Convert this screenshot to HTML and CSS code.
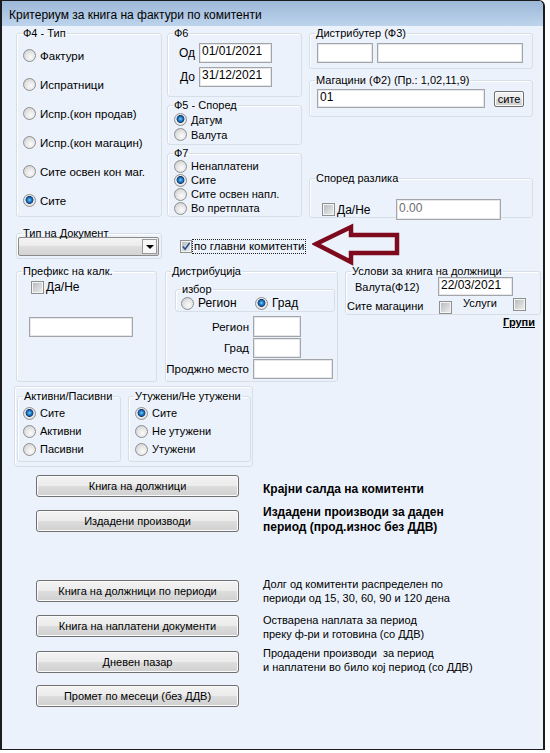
FILE: index.html
```html
<!DOCTYPE html>
<html lang="mk">
<head>
    <meta charset="UTF-8">
    <meta name="viewport" content="width=device-width, initial-scale=1.0">
    <title>Критериум за книга на фактури по комитенти</title>
    <link rel="stylesheet" href="styles.css">
</head>
<body>
<div class="window">
    <div class="titlebar">Критериум за книга на фактури по комитенти</div>
    <div class="client">

        <!-- Горен дел: тип, период, дистрибутер -->
        <div class="row-top">
            <fieldset class="grp g-f4">
                <legend>Ф4 - Тип</legend>
                <div class="f4-list">
                    <label class="opt"><span class="dot"></span>Фактури</label>
                    <label class="opt"><span class="dot"></span>Испратници</label>
                    <label class="opt"><span class="dot"></span>Испр.(кон продав)</label>
                    <label class="opt"><span class="dot"></span>Испр.(кон магацин)</label>
                    <label class="opt"><span class="dot"></span>Сите освен кон маг.</label>
                    <label class="opt"><span class="dot on"></span>Сите</label>
                </div>
            </fieldset>

            <div class="col-mid">
                <fieldset class="grp g-f6">
                    <legend>Ф6</legend>
                    <div class="dates">
                        <span>Од</span><input type="text" class="tb tb-date" value="01/01/2021">
                        <span>До</span><input type="text" class="tb tb-date" value="31/12/2021">
                    </div>
                </fieldset>
                <fieldset class="grp g-f5">
                    <legend>Ф5 - Според</legend>
                    <div class="f5-list">
                        <label class="opt"><span class="dot on"></span>Датум</label>
                        <label class="opt"><span class="dot"></span>Валута</label>
                    </div>
                </fieldset>
                <fieldset class="grp g-f7">
                    <legend>Ф7</legend>
                    <div class="f7-list">
                        <label class="opt"><span class="dot"></span>Ненаплатени</label>
                        <label class="opt"><span class="dot on"></span>Сите</label>
                        <label class="opt"><span class="dot"></span>Сите освен напл.</label>
                        <label class="opt"><span class="dot"></span>Во претплата</label>
                    </div>
                </fieldset>
            </div>

            <div class="col-right">
                <fieldset class="grp g-dist">
                    <legend>Дистрибутер (Ф3)</legend>
                    <div class="dist-row">
                        <input type="text" class="tb tb-dist-code">
                        <input type="text" class="tb tb-dist-name">
                    </div>
                </fieldset>
                <fieldset class="grp g-mag">
                    <legend>Магацини (Ф2) (Пр.: 1,02,11,9)</legend>
                    <div class="mag-row">
                        <input type="text" class="tb tb-mag" value="01">
                        <button class="btn btn-small">сите</button>
                    </div>
                </fieldset>
                <fieldset class="grp g-razl">
                    <legend>Според разлика</legend>
                    <div class="razl-row">
                        <label class="chk chk-razl"><span class="box"></span>Да/Не</label>
                        <input type="text" class="tb tb-razl" value="0.00" disabled>
                    </div>
                </fieldset>
            </div>
        </div>

        <!-- Тип на документ -->
        <div class="row-doc">
            <fieldset class="grp g-doc">
                <legend>Тип на Документ</legend>
                <div class="combo"><span class="combo-btn"></span></div>
            </fieldset>
            <label class="chk chk-glavni">
                <span class="box">
                    <svg width="11" height="11" viewBox="0 0 11 11"><path d="M2 5.5 L4.5 8.5 L9.5 1.5" fill="none" stroke="#27508f" stroke-width="1.8"/></svg>
                </span>
                <span class="focus">по главни комитенти</span>
            </label>
            <svg class="arrow" width="90" height="44" viewBox="0 0 90 44">
                <polygon points="4,21 39,4 39,12 85,12 85,30 39,30 39,39" fill="none" stroke="#7e0a1e" stroke-width="4.5" stroke-linejoin="miter"/>
            </svg>
        </div>

        <!-- Префикс, дистрибуција, услови -->
        <div class="row-mid">
            <fieldset class="grp g-pref">
                <legend>Префикс на калк.</legend>
                <label class="chk chk-pref"><span class="box"></span>Да/Не</label>
                <input type="text" class="tb tb-pref">
            </fieldset>

            <fieldset class="grp g-distr">
                <legend>Дистрибуција</legend>
                <fieldset class="grp g-izbor">
                    <legend>избор</legend>
                    <div class="izbor-row">
                        <label class="opt opt-region"><span class="dot"></span>Регион</label>
                        <label class="opt"><span class="dot on"></span>Град</label>
                    </div>
                </fieldset>
                <div class="loc">
                    <span>Регион</span><input type="text" class="tb tb-loc1">
                    <span>Град</span><input type="text" class="tb tb-loc2">
                    <span>Проджно место</span><input type="text" class="tb tb-loc3">
                </div>
            </fieldset>

            <div class="col-usl">
                <fieldset class="grp g-usl">
                    <legend>Услови за книга на должници</legend>
                    <div class="usl-row1">
                        <span class="usl-lbl">Валута(Ф12)</span>
                        <input type="text" class="tb tb-valuta" value="22/03/2021">
                    </div>
                    <div class="usl-row2">
                        <span class="usl-mag">Сите магацини</span>
                        <span class="box box-mag"></span>
                        <span class="usl-usl">Услуги</span>
                        <span class="box box-usl"></span>
                    </div>
                </fieldset>
                <div class="grupi">Групи</div>
            </div>
        </div>

        <!-- Активни / утужени -->
        <div class="panel">
            <fieldset class="grp g-akt">
                <legend>Активни/Пасивни</legend>
                <div class="akt-list">
                    <label class="opt"><span class="dot on"></span>Сите</label>
                    <label class="opt"><span class="dot"></span>Активни</label>
                    <label class="opt"><span class="dot"></span>Пасивни</label>
                </div>
            </fieldset>
            <fieldset class="grp g-utu">
                <legend>Утужени/Не утужени</legend>
                <div class="utu-list">
                    <label class="opt"><span class="dot on"></span>Сите</label>
                    <label class="opt"><span class="dot"></span>Не утужени</label>
                    <label class="opt"><span class="dot"></span>Утужени</label>
                </div>
            </fieldset>
        </div>

        <!-- Извештаи -->
        <div class="actions">
            <div class="act act-1">
                <button class="btn">Книга на должници</button>
                <div class="desc bold">Крајни салда на комитенти</div>
            </div>
            <div class="act act-2">
                <button class="btn">Издадени производи</button>
                <div class="desc bold">Издадени производи за даден<br>период (прод.износ без ДДВ)</div>
            </div>
            <div class="act act-3">
                <button class="btn">Книга на должници по периоди</button>
                <div class="desc">Долг од комитенти распределен по<br>периоди од 15, 30, 60, 90 и 120 дена</div>
            </div>
            <div class="act act-4">
                <button class="btn">Книга на наплатени документи</button>
                <div class="desc">Остварена наплата за период<br>преку ф-ри и готовина (со ДДВ)</div>
            </div>
            <div class="act act-5">
                <button class="btn">Дневен пазар</button>
                <div class="desc">Продадени производи&nbsp; за период<br>и наплатени во било кој период (со ДДВ)</div>
            </div>
            <div class="act act-6">
                <button class="btn">Промет по месеци (без ДДВ)</button>
            </div>
        </div>

    </div>
</div>
</body>
</html>
```

FILE: styles.css
```css
body {
    margin: 0;
    background: #fff;
    font-family: "Liberation Sans", Arial, sans-serif;
    font-size: 11px;
    color: #000;
}
.window {
    width: 545px;
    height: 750px;
    box-sizing: border-box;
    border: 1px solid #1c1c1c;
    border-left-width: 2px;
    border-right-width: 2px;
    border-radius: 0 6px 0 0;
    background: #ecf2fb;
    overflow: hidden;
}
.titlebar {
    height: 21px;
    padding: 4px 0 0 7px;
    line-height: 21px;
    font-size: 12px;
    background: linear-gradient(#9db7d8, #bdd4ec);
    white-space: nowrap;
}
.client {
    padding: 1px 0 0 14px;
}

/* group box */
.grp {
    margin: 0;
    padding: 0;
    min-width: 0;
    box-sizing: border-box;
    border: 1px solid #d5dfe5;
    border-radius: 3px;
    box-shadow: inset 1px 1px 0 #fff;
}
.grp legend {
    margin-left: 5px;
    padding: 0 1px;
    line-height: 12px;
    font-size: 11px;
}

/* radio / checkbox */
.opt {
    display: flex;
    align-items: center;
    gap: 4px;
    white-space: nowrap;
}
.dot {
    width: 13px;
    height: 13px;
    box-sizing: border-box;
    border-radius: 50%;
    border: 1px solid #8e8f8f;
    background: radial-gradient(circle at 60% 65%, #fbfbfb 0, #e2e2e2 55%, #c3c3c3 100%);
    flex: none;
}
.dot.on {
    background: radial-gradient(circle at 50% 45%, #8fd0f7 0, #2b8ad3 1.6px, #0c5aa5 3px, #1b3b66 3.6px, #ececec 4.3px, #d3d3d3 100%);
}
.chk {
    display: flex;
    align-items: center;
    white-space: nowrap;
}
.box {
    width: 13px;
    height: 13px;
    box-sizing: border-box;
    border: 1px solid #8e8f8f;
    background: linear-gradient(135deg, #b3b7bc, #f0f0f0);
    box-shadow: inset 0 0 0 1px #f4f4f4;
    display: inline-flex;
    align-items: center;
    justify-content: center;
    flex: none;
}

/* text boxes and buttons */
.tb {
    box-sizing: border-box;
    height: 20px;
    margin: 0;
    padding: 0 2px 4px;
    border: 1px solid #a3a5a9;
    box-shadow: inset 0 0 0 1px #e6e7ea;
    background: #fff;
    font-family: "Liberation Sans", Arial, sans-serif;
    font-size: 12px;
    color: #000;
    outline: none;
}
.btn {
    box-sizing: border-box;
    height: 22px;
    margin: 0;
    padding: 0;
    border: 1px solid #707070;
    border-radius: 3px;
    background: linear-gradient(#f3f3f3 0%, #ebebeb 50%, #dddddd 50%, #d0d0d0 100%);
    box-shadow: inset 0 0 0 1px #fbfbfb;
    font-family: "Liberation Sans", Arial, sans-serif;
    font-size: 11px;
    font-weight: 400;
    color: #000;
}

/* row top */
.row-top {
    display: flex;
    align-items: flex-start;
}
.g-f4 {
    width: 146px;
    height: 190px;
}
.f4-list {
    padding: 2px 0 0 6px;
    font-size: 11.5px;
}
.f4-list .opt {
    height: 29px;
}
.col-mid {
    margin-left: 5px;
    width: 135px;
    display: flex;
    flex-direction: column;
    gap: 2px;
}
.g-f6 {
    height: 70px;
}
.dates {
    display: grid;
    grid-template-columns: 17px 73px;
    column-gap: 4px;
    row-gap: 4px;
    align-items: center;
    padding: 4px 0 0 10px;
}
.dates span {
    text-align: right;
    font-size: 12px;
}
.tb-date {
    width: 73px;
}
.g-f5 {
    height: 46px;
}
.f5-list {
    padding: 1px 0 0 6px;
}
.f5-list .opt {
    height: 15px;
}
.g-f7 {
    height: 70px;
}
.f7-list {
    padding: 0 0 0 6px;
}
.f7-list .opt {
    height: 14px;
}
.col-right {
    margin-left: 7px;
    width: 224px;
}
.g-dist {
    height: 42px;
}
.dist-row {
    display: flex;
    gap: 4px;
    padding: 4px 0 0 7px;
}
.tb-dist-code {
    width: 56px;
}
.tb-dist-name {
    width: 146px;
}
.g-mag {
    margin-top: 5px;
    height: 43px;
}
.mag-row {
    display: flex;
    align-items: flex-start;
    padding: 3px 0 0 7px;
}
.tb-mag {
    width: 168px;
    height: 19px;
}
.btn-small {
    width: 30px;
    height: 16px;
    margin: 2px 0 0 9px;
    border-radius: 2px;
    line-height: 12px;
}
.g-razl {
    margin-top: 55px;
    height: 46px;
}
.razl-row {
    display: flex;
    align-items: center;
    padding: 15px 0 0 12px;
}
.chk-razl {
    width: 74px;
    gap: 2px;
    font-size: 12px;
}
.tb-razl {
    width: 105px;
    height: 21px;
    color: #6d6d6d;
}

/* row doc */
.row-doc {
    position: relative;
    display: flex;
    align-items: flex-start;
    margin-top: 9px;
}
.g-doc {
    width: 146px;
    height: 32px;
}
.combo {
    box-sizing: border-box;
    width: 141px;
    height: 19px;
    margin: -2px 0 0 1px;
    border: 1px solid #8a8a8a;
    border-radius: 2px;
    background: linear-gradient(#f4f4f4 0%, #ebebeb 50%, #dedede 50%, #d3d3d3 100%);
    display: flex;
    justify-content: flex-end;
    align-items: center;
    padding-right: 1px;
}
.combo-btn {
    box-sizing: border-box;
    width: 15px;
    height: 15px;
    border: 1px solid #9a9a9a;
    background: #f7f7f7;
    display: flex;
    align-items: center;
    justify-content: center;
}
.combo-btn::after {
    content: "";
    border-left: 4px solid transparent;
    border-right: 4px solid transparent;
    border-top: 4px solid #000;
}
.chk-glavni {
    margin: 12px 0 0 18px;
    font-size: 11.5px;
}
.chk-glavni .box {
    width: 12px;
}
.focus {
    border: 1px dotted #222;
    padding: 0 1px;
    line-height: 13px;
}
.arrow {
    position: absolute;
    left: 296px;
    top: -4px;
}

/* row mid */
.row-mid {
    display: flex;
    align-items: flex-start;
    margin-top: 6px;
}
.g-pref {
    width: 141px;
    height: 117px;
}
.chk-pref {
    margin: 3px 0 0 14px;
    gap: 2px;
    font-size: 12px;
}
.tb-pref {
    display: block;
    width: 104px;
    margin: 23px 0 0 12px;
}
.g-distr {
    margin-left: 8px;
    width: 173px;
    height: 117px;
}
.g-izbor {
    margin: 6px 0 0 9px;
    width: 160px;
    height: 29px;
}
.izbor-row {
    display: flex;
    padding: 1px 0 0 5px;
    font-size: 12px;
}
.opt-region {
    width: 74px;
}
.loc {
    display: grid;
    grid-template-columns: 83px auto;
    column-gap: 4px;
    row-gap: 1px;
    margin-top: 4px;
    font-size: 11.5px;
}
.loc span {
    text-align: right;
    align-self: center;
    white-space: nowrap;
}
.tb-loc1 {
    width: 48px;
    height: 21px;
}
.tb-loc2 {
    width: 48px;
}
.tb-loc3 {
    width: 80px;
}
.col-usl {
    margin-left: 7px;
    width: 196px;
}
.g-usl {
    height: 50px;
}
.usl-row1 {
    display: flex;
    align-items: center;
}
.usl-lbl {
    padding-left: 9px;
    width: 83px;
}
.tb-valuta {
    width: 75px;
    height: 19px;
}
.usl-row2 {
    display: flex;
    align-items: flex-start;
    margin-top: 1px;
    line-height: 13px;
}
.usl-mag {
    width: 92px;
    padding-left: 1px;
    margin-top: 3px;
}
.box-mag {
    margin-top: 4px;
}
.usl-usl {
    width: 50px;
    margin-left: 11px;
}
.box-usl {
    margin-top: 1px;
}
.grupi {
    text-align: right;
    padding-right: 6px;
    font-weight: bold;
    text-decoration: underline;
    line-height: 14px;
}

/* panel */
.panel {
    display: flex;
    gap: 7px;
    box-sizing: border-box;
    width: 239px;
    height: 81px;
    margin: 4px 0 0 -2px;
    padding: 3px 0 0 2px;
    border: 1px solid #d5dfe5;
    border-radius: 3px;
    box-shadow: inset 1px 1px 0 #fff;
}
.g-akt {
    width: 104px;
    height: 72px;
}
.g-utu {
    width: 123px;
    height: 72px;
}
.akt-list, .utu-list {
    padding: 2px 0 0 5px;
}
.utu-list {
    padding-left: 6px;
}
.akt-list .opt, .utu-list .opt {
    height: 18px;
}

/* actions */
.actions {
    margin: 8px 0 0 20px;
}
.act {
    display: flex;
    align-items: flex-start;
    height: 22px;
}
.act .btn {
    width: 203px;
    flex: none;
}
.desc {
    margin-left: 24px;
    line-height: 14px;
    font-size: 11px;
    white-space: nowrap;
}
.desc.bold {
    font-size: 12px;
    font-weight: bold;
    line-height: 15px;
}
.act-1 .desc {
    margin-top: 7px;
}
.act-2 {
    margin-top: 13px;
}
.act-2 .desc {
    margin-top: -5px;
}
.act-3 {
    margin-top: 48px;
}
.act-3 .desc {
    margin-top: -3px;
}
.act-4 {
    margin-top: 13px;
}
.act-4 .desc {
    margin-top: -2px;
}
.act-5 {
    margin-top: 14px;
}
.act-5 .desc {
    margin-top: -5px;
}
.act-6 {
    margin-top: 12px;
}
```
